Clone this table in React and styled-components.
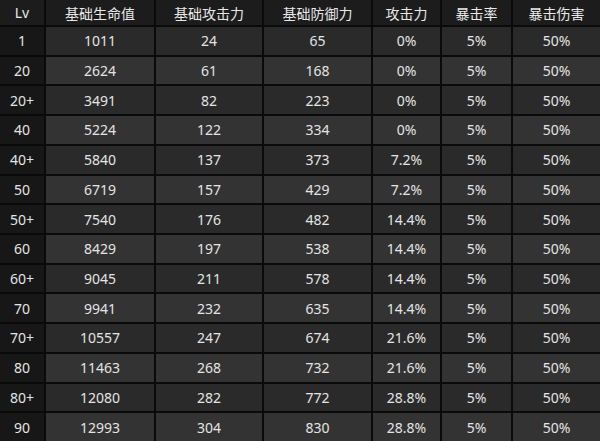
import React from "react";
import styled, { createGlobalStyle } from "styled-components";

const GlobalStyle = createGlobalStyle`
  html, body {
    margin: 0;
    padding: 0;
    background: #000;
  }
`;

const headers = ["Lv", "基础生命值", "基础攻击力", "基础防御力", "攻击力", "暴击率", "暴击伤害"];

const rows = [
  ["1", "1011", "24", "65", "0%", "5%", "50%"],
  ["20", "2624", "61", "168", "0%", "5%", "50%"],
  ["20+", "3491", "82", "223", "0%", "5%", "50%"],
  ["40", "5224", "122", "334", "0%", "5%", "50%"],
  ["40+", "5840", "137", "373", "7.2%", "5%", "50%"],
  ["50", "6719", "157", "429", "7.2%", "5%", "50%"],
  ["50+", "7540", "176", "482", "14.4%", "5%", "50%"],
  ["60", "8429", "197", "538", "14.4%", "5%", "50%"],
  ["60+", "9045", "211", "578", "14.4%", "5%", "50%"],
  ["70", "9941", "232", "635", "14.4%", "5%", "50%"],
  ["70+", "10557", "247", "674", "21.6%", "5%", "50%"],
  ["80", "11463", "268", "732", "21.6%", "5%", "50%"],
  ["80+", "12080", "282", "772", "28.8%", "5%", "50%"],
  ["90", "12993", "304", "830", "28.8%", "5%", "50%"],
];

export default function App() {
  return (
    <>
      <GlobalStyle />
      <Table>
        {headers.map((h) => (
          <HeadCell key={h}>{h}</HeadCell>
        ))}
        {rows.map((row, i) =>
          row.map((v, j) =>
            j === 0 ? (
              <LevelCell key={`${i}-${j}`}>{v}</LevelCell>
            ) : (
              <Cell key={`${i}-${j}`} $odd={i % 2 === 1}>
                {v}
              </Cell>
            )
          )
        )}
      </Table>
    </>
  );
}

const Table = styled.div`
  width: 600px;
  height: 441px;
  display: grid;
  grid-template-columns: 44px 108px 106px 107px 67px 69px 87px;
  grid-template-rows: 25px repeat(14, 1fr);
  gap: 2px;
  background: #0a0a0a;
  font-family: "Noto Sans", "Noto Sans CJK SC", sans-serif;
  color: #e4e4e4;
`;

const BaseCell = styled.div`
  display: flex;
  align-items: center;
  justify-content: center;
  font-size: 14px;
  white-space: nowrap;
`;

const HeadCell = styled(BaseCell)`
  background: #1c1c1c;
  font-size: 14px;
  color: #e8e8e8;
`;

const LevelCell = styled(BaseCell)`
  background: #171717;
`;

const Cell = styled(BaseCell)`
  background: ${(p) => (p.$odd ? "#333333" : "#2a2a2a")};
`;
